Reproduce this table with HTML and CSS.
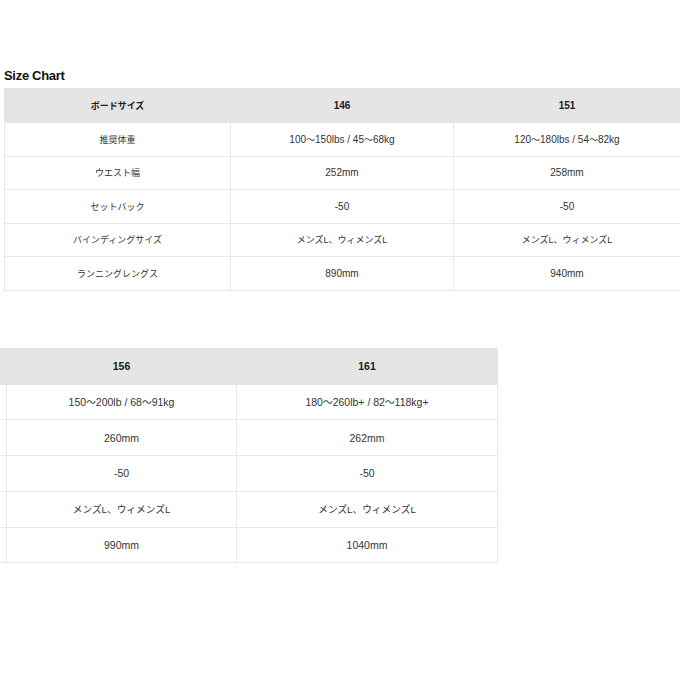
FILE: index.html
```html
<!DOCTYPE html>
<html lang="ja">
<head>
<meta charset="utf-8">
<title>Size Chart</title>
<link rel="stylesheet" href="styles.css">
</head>
<body>
<div class="page">
  <h2 class="title">Size Chart</h2>
  <div class="clip top-clip">
    <table class="chart chart-top">
      <colgroup><col class="c1"><col class="c2"><col class="c3"></colgroup>
      <thead>
        <tr><th class="ja">ボードサイズ</th><th>146</th><th>151</th></tr>
      </thead>
      <tbody>
        <tr><td class="ja">推奨体重</td><td>100<span class="w">〜</span>150lbs / 45<span class="w">〜</span>68kg</td><td>120<span class="w">〜</span>180lbs / 54<span class="w">〜</span>82kg</td></tr>
        <tr><td class="ja">ウエスト幅</td><td>252mm</td><td>258mm</td></tr>
        <tr><td class="ja">セットバック</td><td>-50</td><td>-50</td></tr>
        <tr><td class="ja">バインディングサイズ</td><td class="ja">メンズL、ウィメンズL</td><td class="ja">メンズL、ウィメンズL</td></tr>
        <tr><td class="ja">ランニングレングス</td><td>890mm</td><td>940mm</td></tr>
      </tbody>
    </table>
  </div>
  <div class="clip bottom-clip">
    <table class="chart chart-bottom">
      <colgroup><col class="d1"><col class="d2"><col class="d3"></colgroup>
      <thead>
        <tr><th></th><th>156</th><th>161</th></tr>
      </thead>
      <tbody>
        <tr><td></td><td>150<span class="w">〜</span>200lb / 68<span class="w">〜</span>91kg</td><td>180<span class="w">〜</span>260lb+ / 82<span class="w">〜</span>118kg+</td></tr>
        <tr><td></td><td>260mm</td><td>262mm</td></tr>
        <tr><td></td><td>-50</td><td>-50</td></tr>
        <tr><td></td><td class="ja">メンズL、ウィメンズL</td><td class="ja">メンズL、ウィメンズL</td></tr>
        <tr><td></td><td>990mm</td><td>1040mm</td></tr>
      </tbody>
    </table>
  </div>
</div>
</body>
</html>
```

FILE: styles.css
```css
html, body {
  margin: 0;
  padding: 0;
  background: #ffffff;
}

body {
  font-family: "Liberation Sans", Arial, "Noto Sans CJK JP", sans-serif;
  color: #333333;
}

.page {
  width: 680px;
  height: 680px;
  overflow: hidden;
}

.title {
  margin: 68px 0 0 4px;
  font-size: 13px;
  line-height: 16px;
  font-weight: bold;
  color: #111111;
  letter-spacing: -0.3px;
}

.clip {
  overflow: hidden;
  width: 680px;
}

.top-clip {
  margin-top: 4px;
  padding-left: 4px;
}

.bottom-clip {
  margin-top: 57px;
}

.chart {
  border-collapse: collapse;
  table-layout: fixed;
}

.chart th,
.chart td {
  border: 1px solid #e8e8e8;
  text-align: center;
  vertical-align: middle;
  padding: 0;
  white-space: nowrap;
}

.chart th {
  background: #e5e5e5;
  color: #1a1a1a;
  font-weight: bold;
  border-color: #e5e5e5;
}

.chart-top {
  width: 676px;
  font-size: 10px;
}

.chart-top .c1 { width: 226px; }
.chart-top .c2 { width: 223px; }
.chart-top .c3 { width: 227px; }

.chart-top th { height: 33px; }
.chart-top td { height: 32.5px; }

.chart-top .ja { font-size: 9px; }
.chart-top .w { font-family: "Noto Sans CJK JP", sans-serif; font-size: 9px; }

.chart-bottom {
  width: 721px;
  margin-left: -224px;
  font-size: 10.5px;
}

.chart-bottom .d1 { width: 230px; }
.chart-bottom .d2 { width: 230px; }
.chart-bottom .d3 { width: 261px; }

.chart-bottom th { height: 35px; }
.chart-bottom td { height: 34.8px; }

.chart-bottom .ja { font-size: 9.7px; }
.chart-bottom .w { font-family: "Noto Sans CJK JP", sans-serif; font-size: 9.7px; }
```
